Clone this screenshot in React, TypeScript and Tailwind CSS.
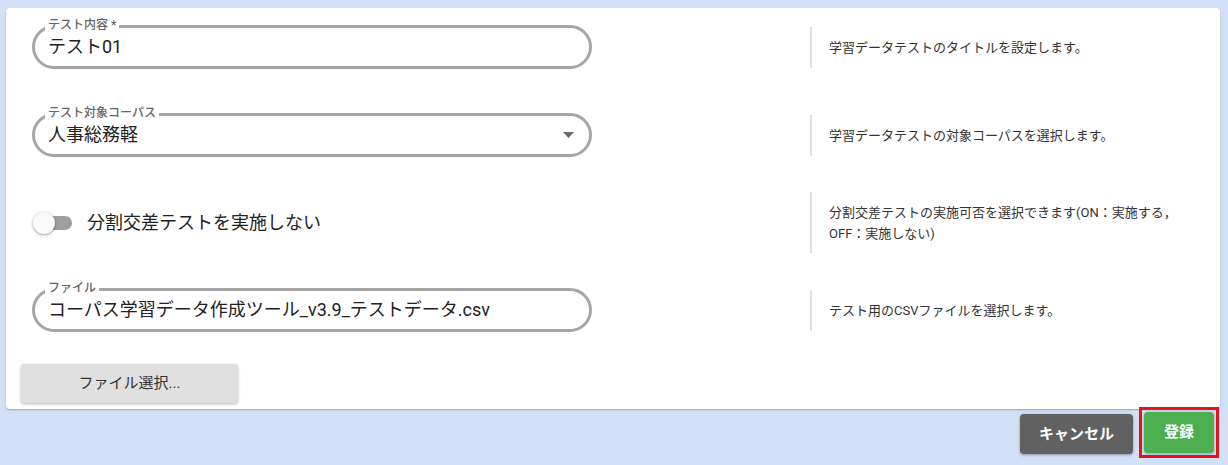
const font = { fontFamily: 'Roboto, "Noto Sans CJK JP", sans-serif' };

function OutlinedField({ label, value, select }: { label: string; value: string; select?: boolean }) {
  return (
    <div className="relative w-[560px] h-[44px] rounded-full border-[3px] border-[#a6a6a6] flex items-center pl-[13px] pr-[14px]">
      <span className="absolute left-[10px] top-[-10px] bg-white px-[3px] text-[12px] leading-[14px] text-[#666] font-medium">
        {label}
      </span>
      <span className="flex-1 text-[18px] text-[#222] leading-none">{value}</span>
      {select && (
        <svg width="11" height="6" viewBox="0 0 11 6" className="mr-[1px]">
          <path d="M0 0 L11 0 L5.5 6 Z" fill="#6b6b6b" />
        </svg>
      )}
    </div>
  );
}

function Desc({ children, h }: { children: React.ReactNode; h: string }) {
  return (
    <div className={`border-l-2 border-[#e0e0e0] pl-[17px] w-[392px] mr-[18px] flex items-center ${h}`}>
      <p className="text-[13px] leading-[21px] text-[#333]">{children}</p>
    </div>
  );
}

export default function App() {
  return (
    <div className="min-h-[465px] bg-[#d2e1f7] pl-[6px] pr-[8px] pt-[8px]" style={font}>
      <div className="bg-white rounded-[4px] shadow-[0_1px_2px_rgba(0,0,0,0.25)] pt-[17px] pb-[6px]">
        <div className="flex items-center justify-between h-[44px] pl-[26px]">
          <OutlinedField label="テスト内容 *" value="テスト01" />
          <Desc h="h-[41px]">学習データテストのタイトルを設定します。</Desc>
        </div>
        <div className="flex items-center justify-between h-[44px] pl-[26px] mt-[44px]">
          <OutlinedField label="テスト対象コーパス" value="人事総務軽" select />
          <Desc h="h-[41px]">学習データテストの対象コーパスを選択します。</Desc>
        </div>
        <div className="flex items-center justify-between h-[61px] pl-[26px] mt-[35px]">
          <div className="flex items-center w-[560px]">
            <div className="relative w-[44px] h-[22px] flex items-center">
              <div className="absolute left-[4px] w-[36px] h-[14px] rounded-full bg-[#9e9e9e]" />
              <div className="relative w-[22px] h-[22px] rounded-full bg-[#fafafa] shadow-[0_1px_3px_rgba(0,0,0,0.4)] ml-[1px]" />
            </div>
            <span className="ml-[11px] text-[18px] text-[#222]">分割交差テストを実施しない</span>
          </div>
          <Desc h="h-[61px]">
            分割交差テストの実施可否を選択できます(ON：実施する，OFF：実施しない)
          </Desc>
        </div>
        <div className="flex items-center justify-between h-[44px] pl-[26px] mt-[35px]">
          <OutlinedField label="ファイル" value="コーパス学習データ作成ツール_v3.9_テストデータ.csv" />
          <Desc h="h-[41px]">テスト用のCSVファイルを選択します。</Desc>
        </div>
        <div className="pl-[15px] mt-[32px]">
          <button className="w-[217px] h-[39px] rounded-[4px] bg-[#e0e0e0] text-[15px] text-[#333] shadow-[0_1px_3px_rgba(0,0,0,0.3)]">
            ファイル選択...
          </button>
        </div>
      </div>
      <div className="flex justify-end items-start gap-[6px] pr-[1px] mt-[-2px]">
        <button className="mt-[7px] w-[113px] h-[40px] rounded-[4px] bg-[#616161] text-white text-[15px] font-bold shadow-[0_1px_3px_rgba(0,0,0,0.35)]">
          キャンセル
        </button>
        <div className="border-[3px] border-[#e3141c] p-[2px]">
          <button className="w-[70px] h-[41px] rounded-[4px] bg-[#4caf50] text-white text-[15px] font-bold shadow-[0_1px_3px_rgba(0,0,0,0.3)]">
            登録
          </button>
        </div>
      </div>
    </div>
  );
}
